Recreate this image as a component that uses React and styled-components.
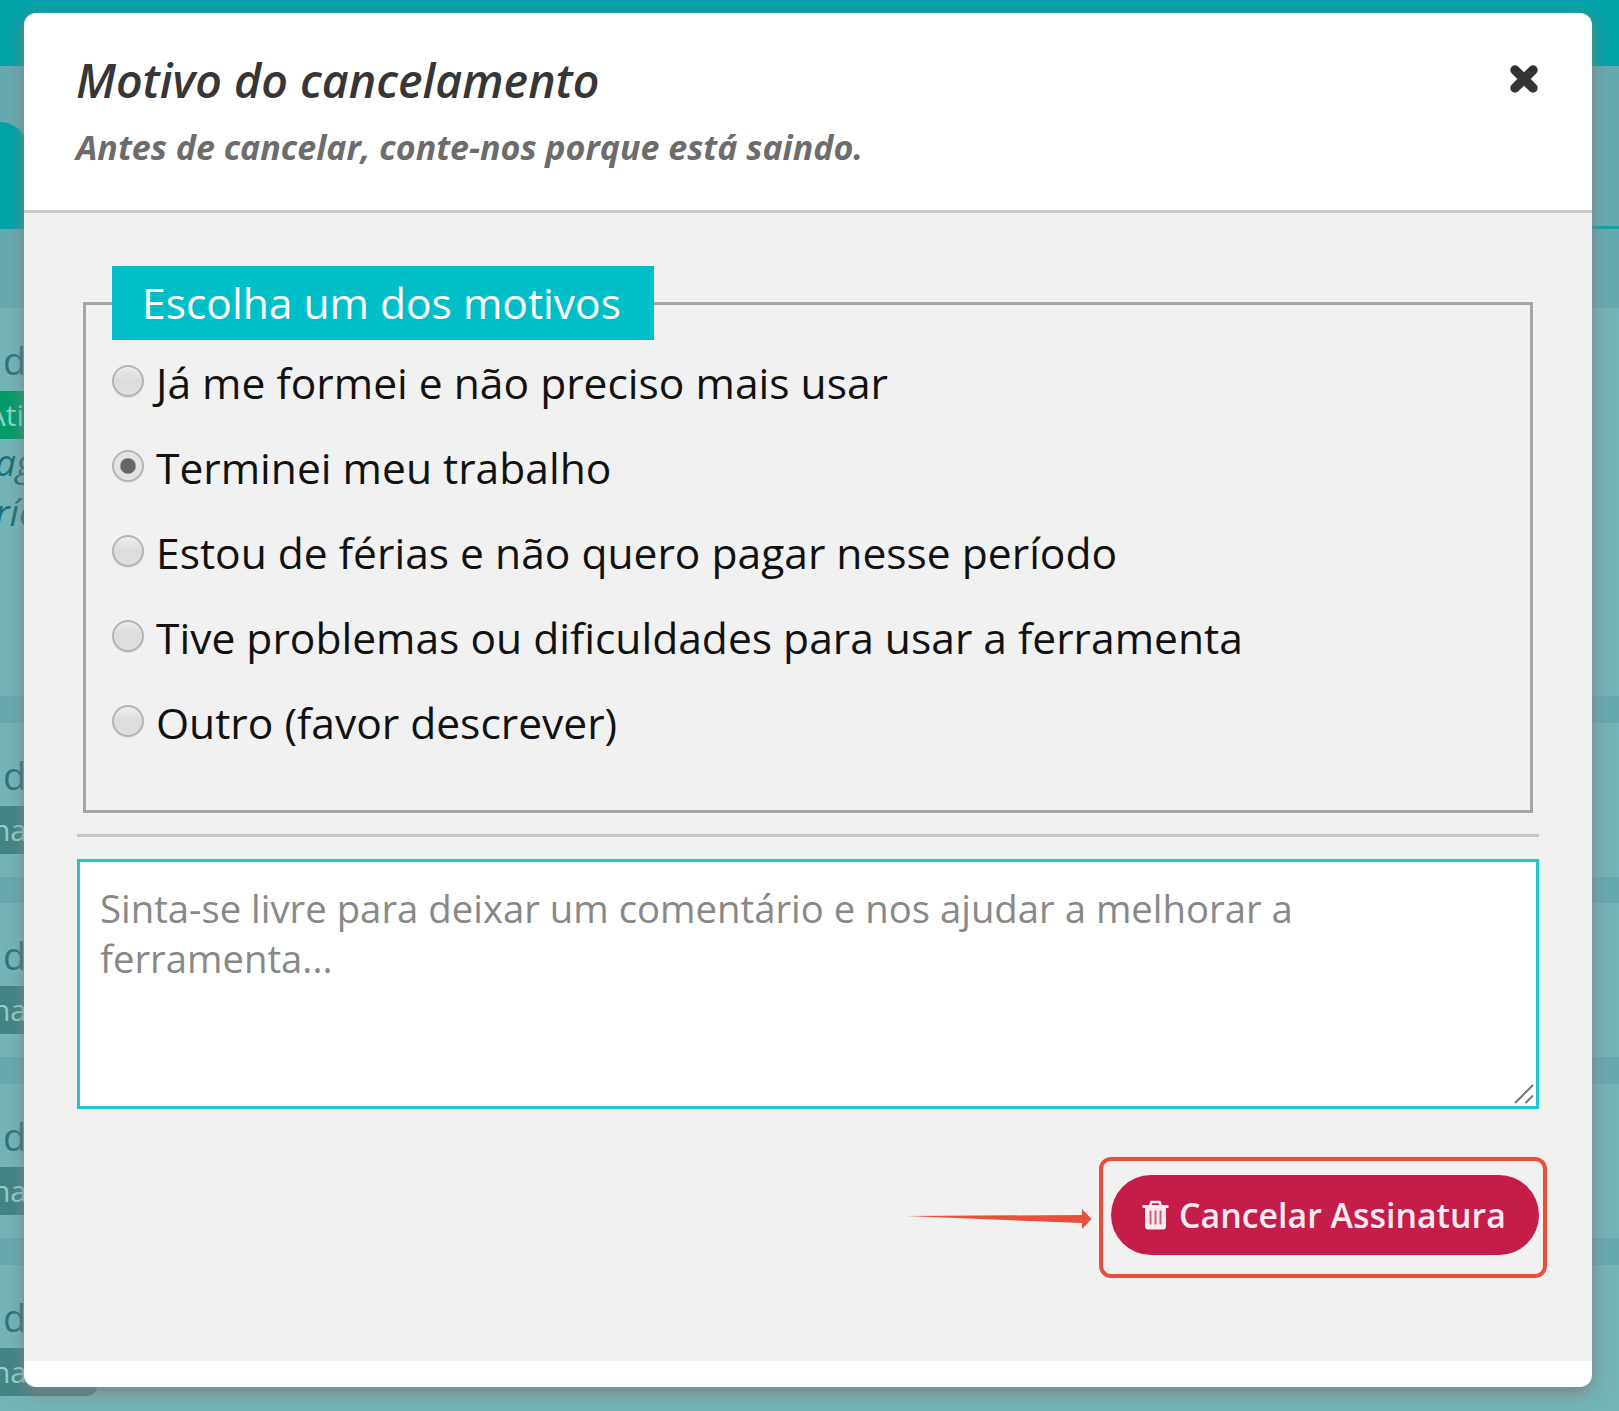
import React, { useState } from 'react';
import styled, { createGlobalStyle } from 'styled-components';

const GlobalStyle = createGlobalStyle`
  * { box-sizing: border-box; }
  body {
    margin: 0;
    overflow: hidden;
    font-family: "Open Sans", "Noto Sans", sans-serif;
  }
`;

const Page = styled.div`
  position: relative;
  height: 1411px;
  overflow: hidden;
  background-color: #66a9af;
`;

const TopBar = styled.div`
  height: 66px;
  background-color: #00a3a8;
`;

const Tabs = styled.div`
  height: 163px;
  padding-top: 56px;
  border-bottom: 3px solid #12a3a9;
`;

const Tab = styled.div`
  width: 28px;
  height: 107px;
  border-top-right-radius: 28px;
  background-color: #00a3a8;
`;

const CardList = styled.div`
  display: flex;
  flex-direction: column;
  gap: 26.6px;
  padding-top: 79px;
`;

const Card = styled.div`
  height: ${props => props.$height || 154.1}px;
  padding-top: 29px;
  background-color: #73b5b7;
  white-space: nowrap;
  flex-shrink: 0;

  &:last-child {
    height: 200px;
  }
`;

const CardTitle = styled.div`
  height: 54px;
  padding-left: 3px;
  font-size: 38px;
  line-height: 46px;
  color: #2c7479;
`;

const Badge = styled.div`
  display: flex;
  align-items: center;
  justify-content: flex-end;
  width: 97px;
  height: 48px;
  padding-right: ${props => props.$end}px;
  border-radius: 0 10px 10px 0;
  font-size: 30px;
  line-height: 46px;
  color: #8fd0c8;
  background-color: ${props => (props.$active ? '#009c68' : '#418585')};
`;

const CardNote = styled.div`
  margin: -2px 0 0 -5px;
  font-size: 37px;
  font-style: italic;
  line-height: 50px;
  color: #1b6f78;
`;

const Modal = styled.div`
  position: absolute;
  top: 13px;
  left: 24px;
  width: 1568px;
  height: 1374px;
  overflow: hidden;
  border-radius: 12px;
  background-color: #fff;
  box-shadow: 0 5px 16px rgba(128, 128, 128, 0.95);
`;

const ModalHeader = styled.header`
  display: flex;
  justify-content: space-between;
  height: 200px;
  padding: 38px 53px 0 52px;
  border-bottom: 3px solid #cdc9c9;
`;

const Title = styled.h2`
  margin: 0;
  font-size: 46.5px;
  font-style: italic;
  font-weight: 600;
  line-height: 58px;
  color: #363636;
`;

const Subtitle = styled.p`
  margin: 16px 0 0;
  font-size: 34px;
  font-style: italic;
  font-weight: 700;
  line-height: 44px;
  color: #6c6c6c;
`;

const CloseButton = styled.button`
  width: 30px;
  height: 30px;
  margin-top: 13px;
  padding: 0;
  border: 0;
  background: none;
`;

const ModalBody = styled.div`
  height: 1148px;
  padding: 53px 53px 0;
  background-color: #f1f1f1;
`;

const Reasons = styled.fieldset`
  height: 547px;
  margin: 0 6px;
  padding: 0 26px;
  border: 3px solid #a5a5a5;
`;

const Legend = styled.legend`
  width: 542px;
  height: 74px;
  padding-left: 30px;
  font-size: 42.55px;
  line-height: 74px;
  color: #fff;
  background-color: #00bfc9;
`;

const Option = styled.label`
  display: flex;
  align-items: center;
  height: 85.1px;
  font-size: 42.55px;
  color: #111;
  white-space: nowrap;
`;

const Radio = styled.input`
  appearance: none;
  flex-shrink: 0;
  width: 32px;
  height: 32px;
  margin: -4px 12px 0 0;
  border: 2px solid #b3b3b3;
  border-radius: 50%;
  background: linear-gradient(#ededed, #dcdcdc 45%, #dedede);
  box-shadow: 0 1px 1px rgba(0, 0, 0, 0.08);

  &:checked {
    background: radial-gradient(circle, #666 0 7px, #e3e3e3 8.5px);
  }
`;

const Rule = styled.hr`
  height: 3px;
  margin: 21px 0 22px;
  border: 0;
  background-color: #c8c4c4;
`;

const CommentBox = styled.div`
  position: relative;
  display: flex;
`;

const Comment = styled.textarea`
  width: 100%;
  height: 250px;
  padding: 21px 20px;
  border: 3px solid #22c6cd;
  outline: 0;
  resize: none;
  font-family: inherit;
  font-size: 38.3px;
  line-height: 50px;
  color: #333;

  &::placeholder {
    color: #888;
    opacity: 1;
  }
`;

const ResizeGrip = styled.svg`
  position: absolute;
  right: 4px;
  bottom: 4px;
`;

const Actions = styled.div`
  display: flex;
  align-items: center;
  justify-content: flex-end;
  gap: 7px;
  margin: 48px -8px 0 0;
`;

const Highlight = styled.div`
  display: flex;
  align-items: flex-start;
  width: 448px;
  height: 121px;
  padding: 14px 0 0 8px;
  border: 4px solid #e7503a;
  border-radius: 12px;
`;

const CancelButton = styled.button`
  display: flex;
  align-items: center;
  width: 428px;
  height: 80px;
  padding: 0 0 0 31px;
  border: 0;
  border-radius: 41px;
  font-family: inherit;
  font-size: 33.9px;
  font-weight: 600;
  white-space: nowrap;
  color: #fcebf0;
  background-color: #c51d49;

  svg {
    flex-shrink: 0;
    margin-right: 10px;
  }
`;

const reasons = [
  'Já me formei e não preciso mais usar',
  'Terminei meu trabalho',
  'Estou de férias e não quero pagar nesse período',
  'Tive problemas ou dificuldades para usar a ferramenta',
  'Outro (favor descrever)',
];

const App = () => {
  const [selected, setSelected] = useState(1);

  return (
    <>
      <GlobalStyle />
      <Page>
        <TopBar />
        <Tabs>
          <Tab />
        </Tabs>
        <CardList>
          <Card $height={388}>
            <CardTitle>d</CardTitle>
            <Badge $active $end={73}>Ati</Badge>
            <CardNote>ag<br />ríodo</CardNote>
          </Card>
          {[1, 2, 3, 4].map(id => (
            <Card key={id}>
              <CardTitle>d</CardTitle>
              <Badge $end={70}>na</Badge>
            </Card>
          ))}
        </CardList>

        <Modal>
          <ModalHeader>
            <div>
              <Title>Motivo do cancelamento</Title>
              <Subtitle>Antes de cancelar, conte-nos porque está saindo.</Subtitle>
            </div>
            <CloseButton aria-label="Fechar">
              <svg width="30" height="30" viewBox="0 0 30 30">
                <path d="M6 6 L24 24 M24 6 L6 24" stroke="#333" strokeWidth="9.5" strokeLinecap="round" />
              </svg>
            </CloseButton>
          </ModalHeader>

          <ModalBody>
            <Reasons>
              <Legend>Escolha um dos motivos</Legend>
              {reasons.map((reason, i) => (
                <Option key={reason}>
                  <Radio type="radio" name="reason" checked={selected === i} onChange={() => setSelected(i)} />
                  {reason}
                </Option>
              ))}
            </Reasons>
            <Rule />
            <CommentBox>
              <Comment placeholder="Sinta-se livre para deixar um comentário e nos ajudar a melhorar a ferramenta..." />
              <ResizeGrip width="22" height="22" viewBox="0 0 22 22">
                <path d="M2 20 L20 2 M12.5 20 L20 12.5" stroke="#777" strokeWidth="2" fill="none" />
              </ResizeGrip>
            </CommentBox>
            <Actions>
              <svg width="186" height="22" viewBox="0 0 186 22">
                <path d="M0 9 L176 8 V2 L185.500 12 L176 22 V16 Z" fill="#e7503a" />
              </svg>
              <Highlight>
                <CancelButton>
                  <svg width="27" height="30" viewBox="0 0 27 30">
                    <path d="M8 6 L9.5 2 H17.5 L19 6" fill="none" stroke="currentColor" strokeWidth="2.5" />
                    <path d="M0.5 5 H26.5 V8 H24 V26 Q24 29.5 21 29.5 H6 Q3 29.5 3 26 V8 H0.5 Z" fill="currentColor" />
                    <path d="M8.5 10.5 V24.5 M13.5 10.5 V24.5 M18.5 10.5 V24.5" stroke="#d65c7c" strokeWidth="2" />
                  </svg>
                  Cancelar Assinatura
                </CancelButton>
              </Highlight>
            </Actions>
          </ModalBody>
        </Modal>
      </Page>
    </>
  );
};

export default App;
